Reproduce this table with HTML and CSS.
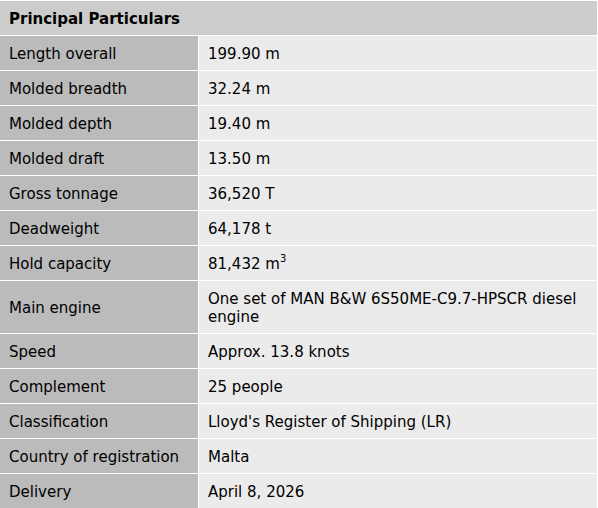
FILE: index.html
```html
<!DOCTYPE html>
<html>
<head>
<meta charset="utf-8">
<link rel="stylesheet" href="styles.css">
</head>
<body>
<div class="specs">
  <div class="title">Principal Particulars</div>
  <div class="k">Length overall</div><div class="v">199.90 m</div>
  <div class="k">Molded breadth</div><div class="v">32.24 m</div>
  <div class="k">Molded depth</div><div class="v">19.40 m</div>
  <div class="k">Molded draft</div><div class="v">13.50 m</div>
  <div class="k">Gross tonnage</div><div class="v">36,520 T</div>
  <div class="k">Deadweight</div><div class="v">64,178 t</div>
  <div class="k">Hold capacity</div><div class="v">81,432 m<sup>3</sup></div>
  <div class="k">Main engine</div><div class="v">One set of MAN B&amp;W 6S50ME-C9.7-HPSCR diesel engine</div>
  <div class="k">Speed</div><div class="v">Approx. 13.8 knots</div>
  <div class="k">Complement</div><div class="v">25 people</div>
  <div class="k">Classification</div><div class="v">Lloyd's Register of Shipping (LR)</div>
  <div class="k">Country of registration</div><div class="v">Malta</div>
  <div class="k">Delivery</div><div class="v">April 8, 2026</div>
</div>
</body>
</html>
```
FILE: styles.css
```css
html, body {
  margin: 0;
  padding: 0;
  background: #ffffff;
}
.specs {
  width: 598px;
  box-sizing: border-box;
  padding: 1px 1px 0 0;
  display: grid;
  grid-template-columns: 198px 1fr;
  gap: 1px;
  background: #ffffff;
  font-family: "DejaVu Sans", Verdana, sans-serif;
  font-size: 15px;
  line-height: 18px;
  color: #000;
}
.title {
  grid-column: 1 / 3;
  background: #cccccc;
  font-weight: bold;
  padding: 9px 8px 7px 9px;
}
.k {
  background: #bbbbbb;
  padding: 9px 8px 7px 9px;
  display: flex;
  align-items: center;
}
.v {
  background: #ebebeb;
  padding: 9px 8px 7px 9px;
}
sup {
  font-size: 10px;
  line-height: 0;
  vertical-align: 7px;
}
```
